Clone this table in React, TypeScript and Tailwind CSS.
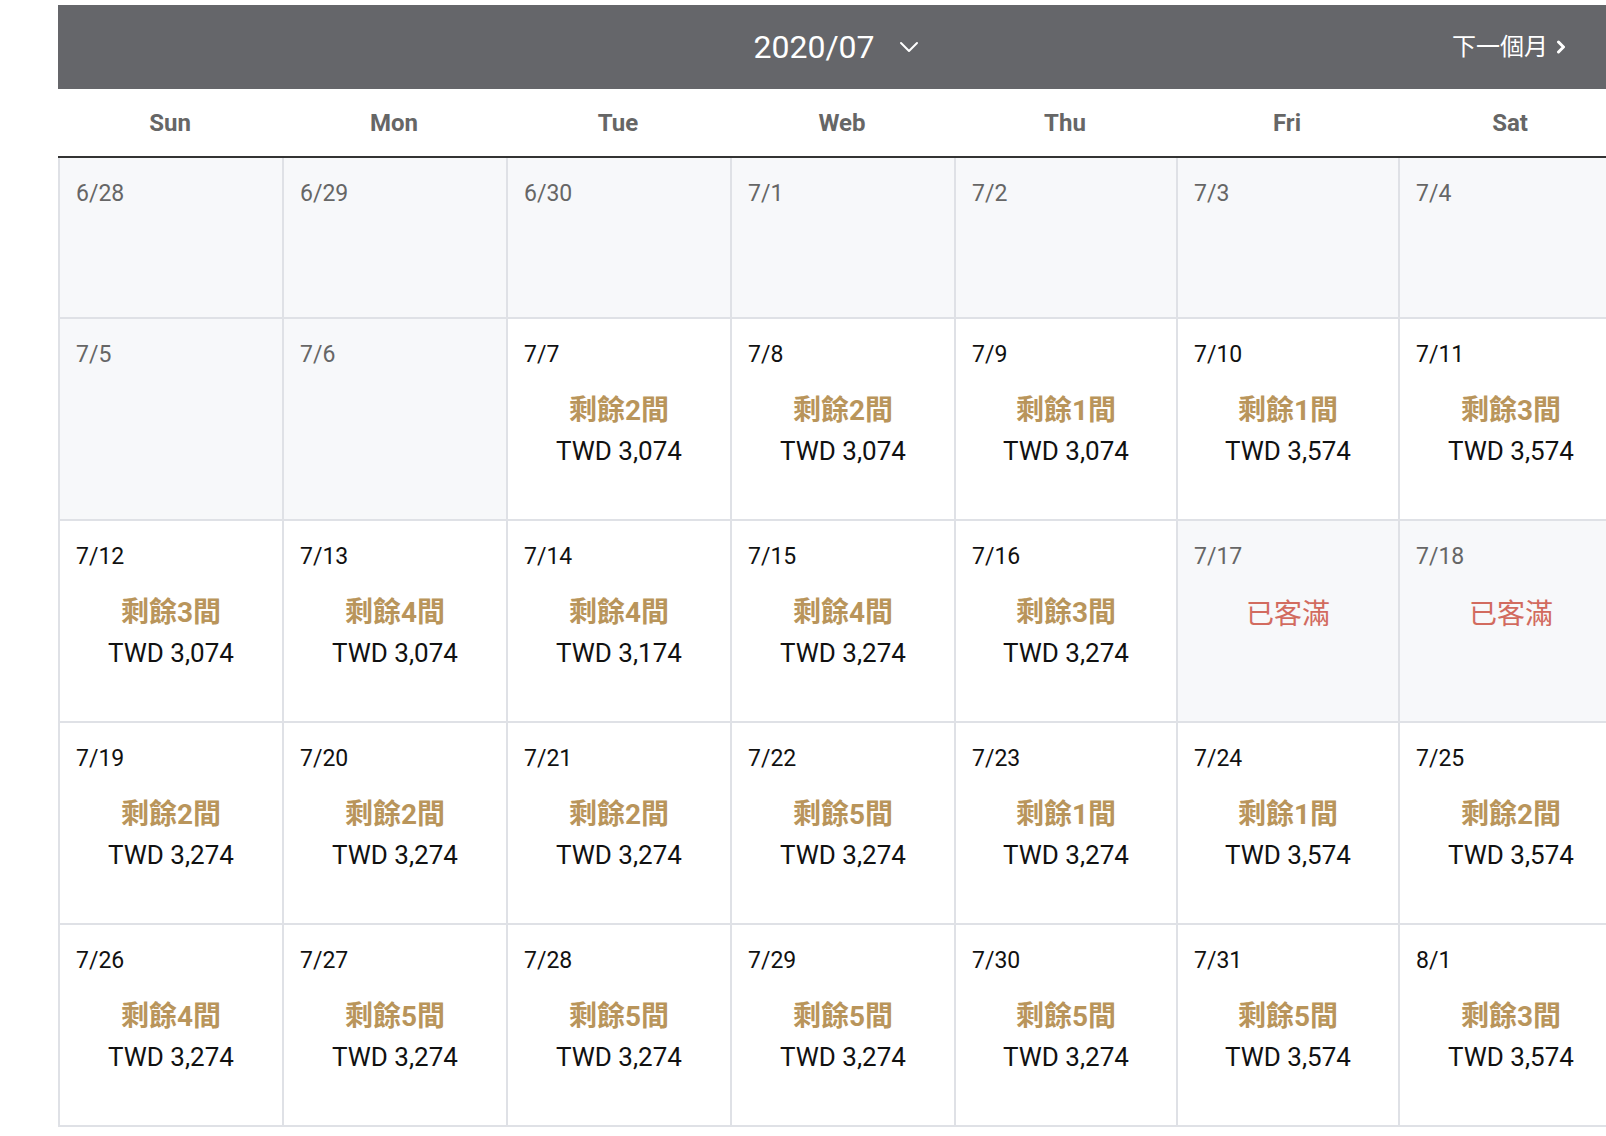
import React from "react";

type Day = { label: string; rooms?: number; price?: string; full?: boolean; muted?: boolean };

const weekdays = ["Sun", "Mon", "Tue", "Web", "Thu", "Fri", "Sat"];

const weeks: Day[][] = [
  [
    { label: "6/28", muted: true },
    { label: "6/29", muted: true },
    { label: "6/30", muted: true },
    { label: "7/1", muted: true },
    { label: "7/2", muted: true },
    { label: "7/3", muted: true },
    { label: "7/4", muted: true },
  ],
  [
    { label: "7/5", muted: true },
    { label: "7/6", muted: true },
    { label: "7/7", rooms: 2, price: "3,074" },
    { label: "7/8", rooms: 2, price: "3,074" },
    { label: "7/9", rooms: 1, price: "3,074" },
    { label: "7/10", rooms: 1, price: "3,574" },
    { label: "7/11", rooms: 3, price: "3,574" },
  ],
  [
    { label: "7/12", rooms: 3, price: "3,074" },
    { label: "7/13", rooms: 4, price: "3,074" },
    { label: "7/14", rooms: 4, price: "3,174" },
    { label: "7/15", rooms: 4, price: "3,274" },
    { label: "7/16", rooms: 3, price: "3,274" },
    { label: "7/17", muted: true, full: true },
    { label: "7/18", muted: true, full: true },
  ],
  [
    { label: "7/19", rooms: 2, price: "3,274" },
    { label: "7/20", rooms: 2, price: "3,274" },
    { label: "7/21", rooms: 2, price: "3,274" },
    { label: "7/22", rooms: 5, price: "3,274" },
    { label: "7/23", rooms: 1, price: "3,274" },
    { label: "7/24", rooms: 1, price: "3,574" },
    { label: "7/25", rooms: 2, price: "3,574" },
  ],
  [
    { label: "7/26", rooms: 4, price: "3,274" },
    { label: "7/27", rooms: 5, price: "3,274" },
    { label: "7/28", rooms: 5, price: "3,274" },
    { label: "7/29", rooms: 5, price: "3,274" },
    { label: "7/30", rooms: 5, price: "3,274" },
    { label: "7/31", rooms: 5, price: "3,574" },
    { label: "8/1", rooms: 3, price: "3,574" },
  ],
];

// column widths measured off the grid lines
const cols = "grid grid-cols-[224px_224px_224px_224px_222px_222px_224px]";

function DayCell({ day, tall }: { day: Day; tall: boolean }) {
  return (
    <div
      className={`border-b-2 border-l-2 border-[#dfe1e6] ${tall ? "h-[202px]" : "h-[161px]"} ${
        day.muted ? "bg-[#f7f8fa]" : "bg-white"
      }`}
    >
      <p className={`pl-[16px] pt-[22px] text-[23px] leading-[28px] ${day.muted ? "text-[#666]" : "text-[#111]"}`}>
        {day.label}
      </p>
      {day.rooms ? (
        <div className="mt-[22px] text-center leading-[40px]">
          <p className="text-[28px] font-bold text-[#b9955b]">剩餘{day.rooms}間</p>
          <p className="text-[26px] text-[#111]">TWD {day.price}</p>
        </div>
      ) : null}
      {day.full ? <p className="mt-[24px] text-center text-[28px] leading-[40px] text-[#d26b5f]">已客滿</p> : null}
    </div>
  );
}

export default function App() {
  return (
    <div className="h-[1136px] w-[1606px] overflow-hidden bg-white pl-[58px] pt-[5px] font-['Roboto','Noto_Sans_CJK_TC',sans-serif]">
      <div className="w-[1564px]">
        <header className="grid h-[84px] grid-cols-[1fr_auto_1fr] items-center bg-[#65666a] text-white">
          <div />
          <div className="flex items-center gap-[24px] pr-[8px]">
            <span className="text-[32px] leading-none">2020/07</span>
            <svg width="20" height="12" viewBox="0 0 20 12" fill="none" stroke="white" strokeWidth="2" strokeLinecap="round" strokeLinejoin="round">
              <polyline points="2,2 10,10 18,2" />
            </svg>
          </div>
          <div className="flex items-center justify-end gap-[8px] pr-[56px]">
            <span className="text-[24px]">下一個月</span>
            <svg width="10" height="14" viewBox="0 0 10 14" fill="none" stroke="white" strokeWidth="3" strokeLinecap="round" strokeLinejoin="round">
              <polyline points="2.5,2 7.5,7 2.5,12" />
            </svg>
          </div>
        </header>

        <div className={`${cols} h-[69px] items-center border-b-2 border-[#333]`}>
          {weekdays.map((name) => (
            <span key={name} className="text-center text-[24px] font-bold text-[#666]">
              {name}
            </span>
          ))}
        </div>

        {weeks.map((week, i) => (
          <div key={i} className={cols}>
            {week.map((day) => (
              <DayCell key={day.label} day={day} tall={i > 0} />
            ))}
          </div>
        ))}
      </div>
    </div>
  );
}
